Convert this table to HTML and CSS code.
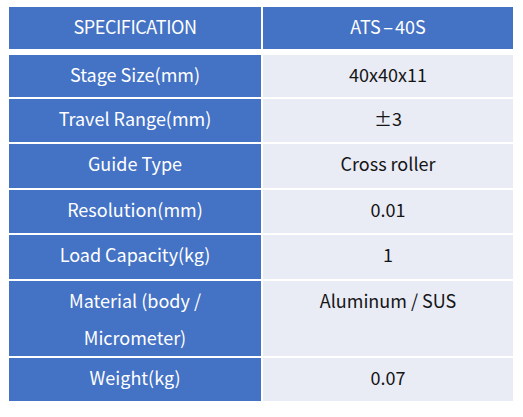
FILE: index.html
```html
<!DOCTYPE html>
<html>
<head>
<meta charset="utf-8">
<link rel="stylesheet" href="styles.css">
</head>
<body>
<div class="spec">
  <div class="cell key head spec-title">SPECIFICATION</div>
  <div class="cell key head">ATS<span class="dash">-</span>40S</div>

  <div class="cell key">Stage Size(mm)</div>
  <div class="cell val">40x40x11</div>

  <div class="cell key">Travel Range(mm)</div>
  <div class="cell val">±3</div>

  <div class="cell key">Guide Type</div>
  <div class="cell val">Cross roller</div>

  <div class="cell key">Resolution(mm)</div>
  <div class="cell val">0.01</div>

  <div class="cell key">Load Capacity(kg)</div>
  <div class="cell val">1</div>

  <div class="cell key">Material (body /<br>Micrometer)</div>
  <div class="cell val">Aluminum / SUS</div>

  <div class="cell key">Weight(kg)</div>
  <div class="cell val">0.07</div>
</div>
</body>
</html>
```
FILE: styles.css
```css
html, body {
  margin: 0;
  background: #ffffff;
}
body {
  padding: 7px 0 0 9px;
  font-family: "Noto Sans CJK KR", "Noto Sans", sans-serif;
}
.spec {
  display: grid;
  grid-template-columns: 252px 250px;
  grid-template-rows: 46px 42px 43px 44px 43px 44px 75px 43px;
  column-gap: 2px;
  row-gap: 2px;
  width: 504px;
}
.cell {
  display: flex;
  justify-content: center;
  align-items: flex-start;
  text-align: center;
  font-size: 18px;
  font-weight: 400;
  line-height: 37px;
  padding-top: 1px;
  box-sizing: border-box;
  letter-spacing: 0;
}
.key {
  background: #4472c4;
  color: #ffffff;
}
.val {
  background: #e9ebf5;
  color: #151515;
}
.head {
  height: 42px;
  padding-top: 1px;
}
.spec-title {
  letter-spacing: -0.4px;
}
.dash {
  display: inline-block;
  transform: scaleX(1.8);
  margin: 0 4px;
}
```
